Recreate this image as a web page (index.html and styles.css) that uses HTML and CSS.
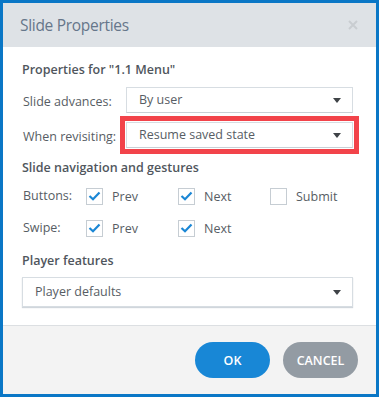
FILE: index.html
```html
<!DOCTYPE html>
<html>
<head>
<meta charset="utf-8">
<link rel="stylesheet" href="styles.css">
</head>
<body>
<div class="dialog">
  <div class="header">
    <span class="title">Slide Properties</span>
    <svg class="close" width="10" height="10" viewBox="0 0 10 10"><path d="M1 1L9 9M9 1L1 9" stroke="#c9cdd1" stroke-width="2"/></svg>
  </div>
  <div class="content">
    <div class="heading h1">Properties for "1.1 Menu"</div>
    <div class="field first">
      <span class="label">Slide advances:</span>
      <div class="select">By user<span class="caret"></span></div>
    </div>
    <div class="field second">
      <span class="label">When revisiting:</span>
      <div class="select highlighted">Resume saved state<span class="caret"></span></div>
    </div>
    <div class="heading h2">Slide navigation and gestures</div>
    <div class="checks">
      <span class="label">Buttons:</span>
      <label class="check"><span class="box on"><svg width="13" height="10" viewBox="0 0 13 10"><path d="M1.5 5L5 8.3L11.5 1.5" fill="none" stroke="#1b87d5" stroke-width="2.2"/></svg></span>Prev</label>
      <label class="check"><span class="box on"><svg width="13" height="10" viewBox="0 0 13 10"><path d="M1.5 5L5 8.3L11.5 1.5" fill="none" stroke="#1b87d5" stroke-width="2.2"/></svg></span>Next</label>
      <label class="check"><span class="box"></span>Submit</label>
    </div>
    <div class="checks row2">
      <span class="label">Swipe:</span>
      <label class="check"><span class="box on"><svg width="13" height="10" viewBox="0 0 13 10"><path d="M1.5 5L5 8.3L11.5 1.5" fill="none" stroke="#1b87d5" stroke-width="2.2"/></svg></span>Prev</label>
      <label class="check"><span class="box on"><svg width="13" height="10" viewBox="0 0 13 10"><path d="M1.5 5L5 8.3L11.5 1.5" fill="none" stroke="#1b87d5" stroke-width="2.2"/></svg></span>Next</label>
    </div>
    <div class="heading h3">Player features</div>
    <div class="select wide">Player defaults<span class="caret"></span></div>
  </div>
  <div class="footer">
    <button class="btn ok">OK</button>
    <button class="btn cancel">CANCEL</button>
  </div>
</div>
</body>
</html>
```
FILE: styles.css
```css
* { box-sizing: border-box; }
html, body { margin: 0; padding: 0; background: #fff; }
body {
  font-family: "Open Sans", "Noto Sans", sans-serif;
  color: #555b62;
}
.dialog {
  width: 379px;
  height: 397px;
  border: 3px solid #0a77c6;
  display: flex;
  flex-direction: column;
  background: #fff;
}
.header {
  height: 44px;
  background: #dee2e6;
  display: flex;
  align-items: center;
  justify-content: space-between;
  padding: 0 18px 0 17px;
  flex: none;
}
.title {
  font-size: 15.5px;
  color: #66768a;
  letter-spacing: -0.3px;
}
.close { display: block; margin-top: -1px; }
.content {
  flex: 1;
  padding: 14px 23px 0 19px;
  border-bottom: 1px solid #dcdfe2;
}
.heading {
  font-size: 12.5px;
  font-weight: 600;
  line-height: 18px;
  color: #50565d;
}
.field {
  display: grid;
  grid-template-columns: 104px 1fr;
  align-items: center;
}
.field.first { margin-top: 8px; }
.field.second { margin-top: 9px; }
.label {
  font-size: 12.5px;
  padding-left: 1px;
  color: #575d64;
  line-height: 18px;
}
.field .label { margin-top: 3px; }
.select {
  position: relative;
  height: 26px;
  border: 1px solid #d7dde2;
  border-bottom-color: #c8d0d6;
  font-size: 12.5px;
  line-height: 24px;
  padding-left: 12px;
  color: #575d64;
  background: #fff;
}
.select.highlighted {
  outline: 5px solid #f2434a;
  outline-offset: 1px;
}
.caret {
  position: absolute;
  right: 11px;
  top: 50%;
  margin-top: -2px;
  width: 0;
  height: 0;
  border-left: 4px solid transparent;
  border-right: 4px solid transparent;
  border-top: 5px solid #3f4347;
}
.h2 { margin-top: 11px; }
.checks {
  display: grid;
  grid-template-columns: 64px 92px 92px 1fr;
  align-items: center;
  margin-top: 10px;
  height: 17px;
}
.checks.row2 { margin-top: 15px; }
.check {
  display: flex;
  align-items: center;
  font-size: 12.5px;
  color: #575d64;
}
.box {
  width: 17px;
  height: 17px;
  border: 1px solid #c6cdd3;
  margin-right: 9px;
  display: flex;
  align-items: center;
  justify-content: center;
  flex: none;
}
.h3 { margin-top: 16px; }
.select.wide {
  margin-top: 7px;
  height: 30px;
  line-height: 28px;
  padding-left: 12px;
  border-color: #d7dde2;
  box-shadow: 0 1px 1px rgba(150,165,178,0.45);
}
.footer {
  height: 68px;
  flex: none;
  background: #f3f3f3;
  display: flex;
  align-items: center;
  justify-content: flex-end;
  gap: 13px;
  padding-right: 18px;
}
.btn {
  width: 75px;
  height: 36px;
  border: none;
  border-radius: 18px;
  color: #fff;
  font-family: "Open Sans", "Noto Sans", sans-serif;
  font-size: 12.5px;
  font-weight: 600;
  padding: 0;
}
.ok { background: #1887d6; }
.cancel { background: #939ba3; }
```
